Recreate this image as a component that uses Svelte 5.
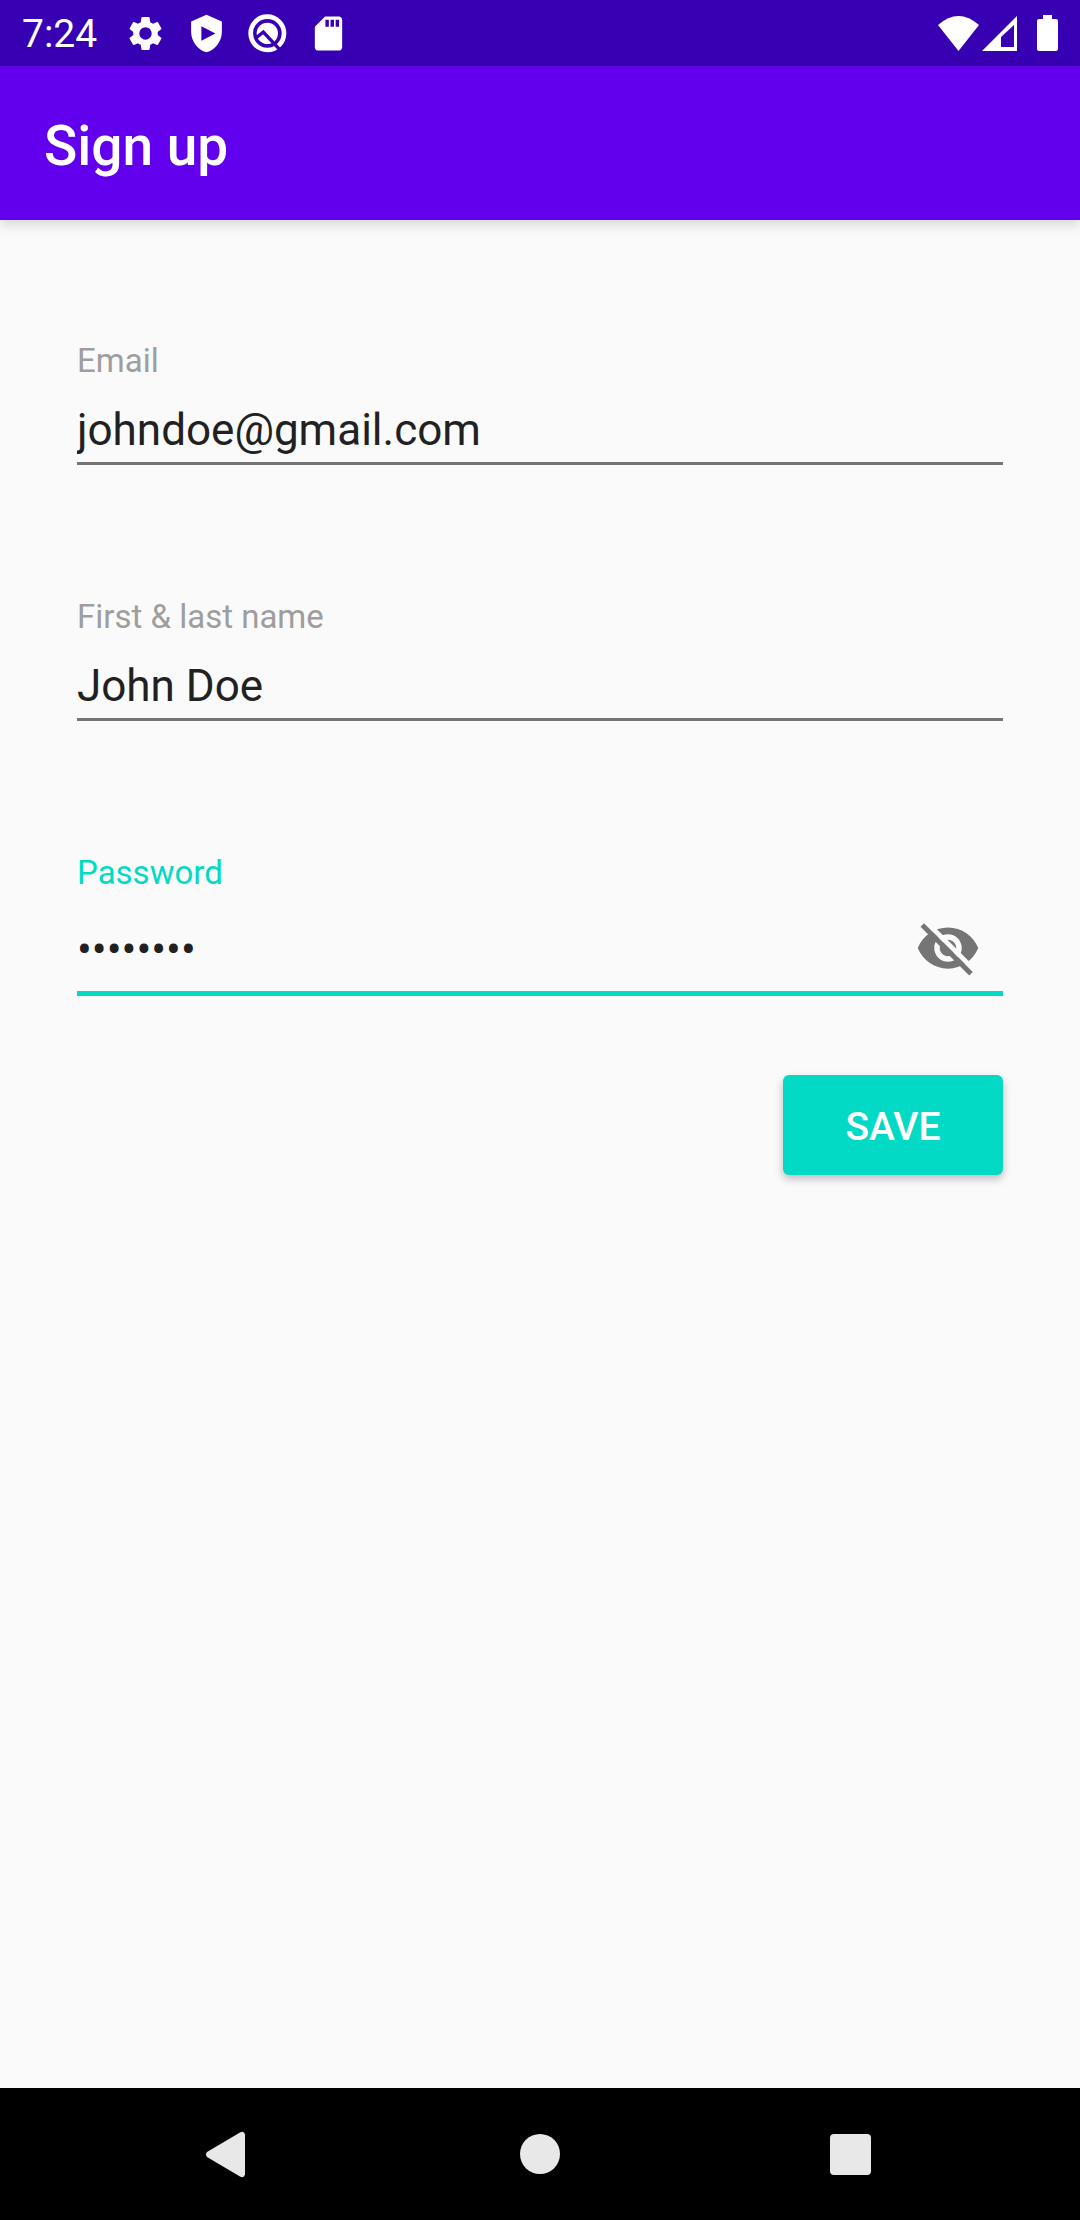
<script>
  let email = $state('johndoe@gmail.com');
  let name = $state('John Doe');
  let password = $state('password');
  let revealed = $state(false);
</script>

<div class="screen">
  <div class="status">
    <span class="clock">7:24</span>
    <div class="notices">
      <svg viewBox="0 0 24 24" aria-hidden="true"><path d="M19.14 12.94c.04-.3.06-.61.06-.94 0-.32-.02-.64-.07-.94l2.03-1.58a.49.49 0 0 0 .12-.61l-1.92-3.32a.488.488 0 0 0-.59-.22l-2.39.96c-.5-.38-1.03-.7-1.62-.94l-.36-2.54a.484.484 0 0 0-.48-.41h-3.84c-.24 0-.43.17-.47.41l-.36 2.54c-.59.24-1.13.57-1.62.94l-2.39-.96c-.22-.08-.47 0-.59.22L2.74 8.87c-.12.21-.08.47.12.61l2.03 1.58c-.05.3-.09.63-.09.94s.02.64.07.94l-2.03 1.58a.49.49 0 0 0-.12.61l1.92 3.32c.12.22.37.29.59.22l2.39-.96c.5.38 1.03.7 1.62.94l.36 2.54c.05.24.24.41.48.41h3.84c.24 0 .44-.17.47-.41l.36-2.54c.59-.24 1.13-.56 1.62-.94l2.39.96c.22.08.47 0 .59-.22l1.92-3.32c.12-.22.07-.47-.12-.61l-2.01-1.58zM12 15.6c-1.98 0-3.6-1.62-3.6-3.6s1.62-3.6 3.6-3.6 3.6 1.62 3.6 3.6-1.62 3.6-3.6 3.6z" /></svg>
      <svg viewBox="0 0 24 24" aria-hidden="true"><path fill-rule="evenodd" d="M12 1 3 5v6c0 5.55 3.84 10.74 9 12 5.16-1.26 9-6.45 9-12V5l-9-4zM9 7.8v8.4l8.2-4.2z" /></svg>
      <svg viewBox="0 0 123 123" aria-hidden="true">
        <circle class="ring" cx="61" cy="61" r="50" />
        <circle cx="61" cy="61" r="32" />
        <path class="cut" d="M26 76 49 57 104 116" />
      </svg>
      <svg viewBox="0 0 24 24" aria-hidden="true"><path fill-rule="evenodd" d="M18 2h-8L4 8v12c0 1.100.9 2 2 2h12c1.100 0 2-.9 2-2V4c0-1.100-.9-2-2-2zM10.200 4h2v4h-2zM13.200 4h2v4h-2zM16.200 4h2v4h-2z" /></svg>
    </div>
    <div class="signals">
      <svg class="wifi" viewBox="0 0 41 35" aria-hidden="true"><path d="M0 9Q20.500-9 41 9L20.500 35z" /></svg>
      <svg class="cell" viewBox="0 0 35 35" aria-hidden="true"><path fill-rule="evenodd" d="M35 0v35H0zM32 9 19 21v10h13z" /></svg>
      <svg class="battery" viewBox="0 0 21 36" aria-hidden="true"><path d="M6 0h9v4h4q2 0 2 2v28q0 2-2 2H2q-2 0-2-2V6q0-2 2-2h4z" /></svg>
    </div>
  </div>

  <header><h1>Sign up</h1></header>

  <main>
    <form onsubmit={(e) => e.preventDefault()}>
      <div class="field">
        <label for="email">Email</label>
        <div class="control"><input id="email" type="email" bind:value={email} /></div>
      </div>
      <div class="field">
        <label for="name">First &amp; last name</label>
        <div class="control"><input id="name" type="text" bind:value={name} /></div>
      </div>
      <div class="field active">
        <label for="password">Password</label>
        <div class="control">
          <input id="password" type={revealed ? 'text' : 'password'} bind:value={password} />
          <button class="toggle" type="button" aria-label="Show password" aria-pressed={revealed} onclick={() => (revealed = !revealed)}>
            <svg viewBox="0 0 24 24" aria-hidden="true">
              <mask id="slash">
                <rect width="24" height="24" fill="white" />
                <path d="M0-2.800 24 21.200V23.700L0-.300z" fill="black" />
              </mask>
              <g mask="url(#slash)">
                <path fill-rule="evenodd" d="M12 4.500C7 4.500 2.730 7.610 1 12c1.730 4.390 6 7.500 11 7.500s9.270-3.110 11-7.500c-1.730-4.390-6-7.500-11-7.500zM12 17c-2.760 0-5-2.240-5-5s2.240-5 5-5 5 2.240 5 5-2.240 5-5 5zm0-8c-1.660 0-3 1.340-3 3s1.340 3 3 3 3-1.340 3-3-1.340-3-3-3z" />
              </g>
              <path d="M2 4.270 3.270 3 21 20.730 19.730 22z" />
            </svg>
          </button>
        </div>
      </div>
      <button class="save" type="submit">SAVE</button>
    </form>
  </main>

  <nav aria-label="System">
    <button type="button" aria-label="Back"><svg viewBox="0 0 66 66" aria-hidden="true"><path d="M10 31 43 11.500q4-2 5 2v40q-1 4-5 2L10 36q-2-2.500 0-5z" /></svg></button>
    <button type="button" aria-label="Home"><svg viewBox="0 0 66 66" aria-hidden="true"><circle cx="33" cy="33" r="20" /></svg></button>
    <button type="button" aria-label="Recent apps"><svg viewBox="0 0 66 66" aria-hidden="true"><rect x="13" y="13" width="41" height="41" rx="4" /></svg></button>
  </nav>
</div>

<style>
  :global(body) {
    margin: 0;
    background: #fafafa;
  }
  .screen {
    display: flex;
    flex-direction: column;
    min-height: 100vh;
    font-family: Roboto, sans-serif;
    color: #212121;
  }
  svg {
    display: block;
    fill: currentColor;
  }
  button {
    border: 0;
    padding: 0;
    background: none;
    color: inherit;
    font-family: inherit;
    cursor: pointer;
  }
  .status {
    display: flex;
    align-items: center;
    height: 66px;
    padding: 0 22px;
    background: #3700b3;
    color: #fff;
  }
  .clock {
    padding-top: 2px;
    font-size: 39px;
    line-height: 48px;
  }
  .notices {
    display: flex;
    gap: 20px;
    margin-left: 28px;
  }
  .notices svg {
    width: 41px;
    height: 41px;
  }
  .ring {
    fill: none;
    stroke: currentColor;
    stroke-width: 14;
  }
  .cut {
    fill: none;
    stroke: #3700b3;
    stroke-width: 10;
  }
  .signals {
    display: flex;
    align-items: center;
    margin-left: auto;
  }
  .wifi {
    width: 41px;
    height: 35px;
  }
  .cell {
    width: 35px;
    height: 35px;
    margin: 0 20px 0 3px;
  }
  .battery {
    width: 21px;
    height: 36px;
  }
  header {
    padding: 47px 44px 41px;
    background: #6200ee;
    color: #fff;
    box-shadow: 0 4px 12px rgba(0, 0, 0, 0.16);
  }
  h1 {
    margin: 0;
    font-size: 55px;
    font-weight: 500;
    line-height: 66px;
  }
  main {
    flex: 1;
    padding: 121px 77px 77px;
  }
  form {
    display: flex;
    flex-direction: column;
  }
  .field {
    display: flex;
    flex-direction: column;
    gap: 22px;
    margin-bottom: 132px;
  }
  label {
    font-size: 33px;
    line-height: 40px;
    color: #9e9e9e;
  }
  .control {
    display: flex;
    align-items: center;
    padding-bottom: 5px;
    border-bottom: 3px solid #757575;
  }
  input {
    flex: 1;
    min-width: 0;
    height: 54px;
    padding: 0;
    border: 0;
    outline: 0;
    background: none;
    color: inherit;
    font-family: inherit;
    font-size: 44px;
  }
  .active {
    margin-bottom: 79px;
  }
  .active label {
    color: #03dac5;
  }
  .active .control {
    padding-bottom: 10px;
    border-bottom: 5px solid #03dac5;
  }
  .active input {
    padding-top: 4px;
  }
  .toggle {
    margin-right: 22px;
    color: #757575;
  }
  .toggle svg {
    width: 66px;
    height: 66px;
  }
  .save {
    align-self: flex-end;
    min-width: 220px;
    padding: 4px 61px 0;
    border-radius: 6px;
    background: #03dac5;
    color: #fff;
    font-size: 39px;
    font-weight: 500;
    line-height: 96px;
    box-shadow: 0 4px 8px rgba(0, 0, 0, 0.25);
  }
  nav {
    display: grid;
    grid-template-columns: repeat(3, 1fr);
    height: 132px;
    padding: 0 7%;
    background: #000;
    color: #e8e8e8;
  }
  nav button {
    display: grid;
    place-items: center;
  }
  nav svg {
    width: 66px;
    height: 66px;
  }
</style>
